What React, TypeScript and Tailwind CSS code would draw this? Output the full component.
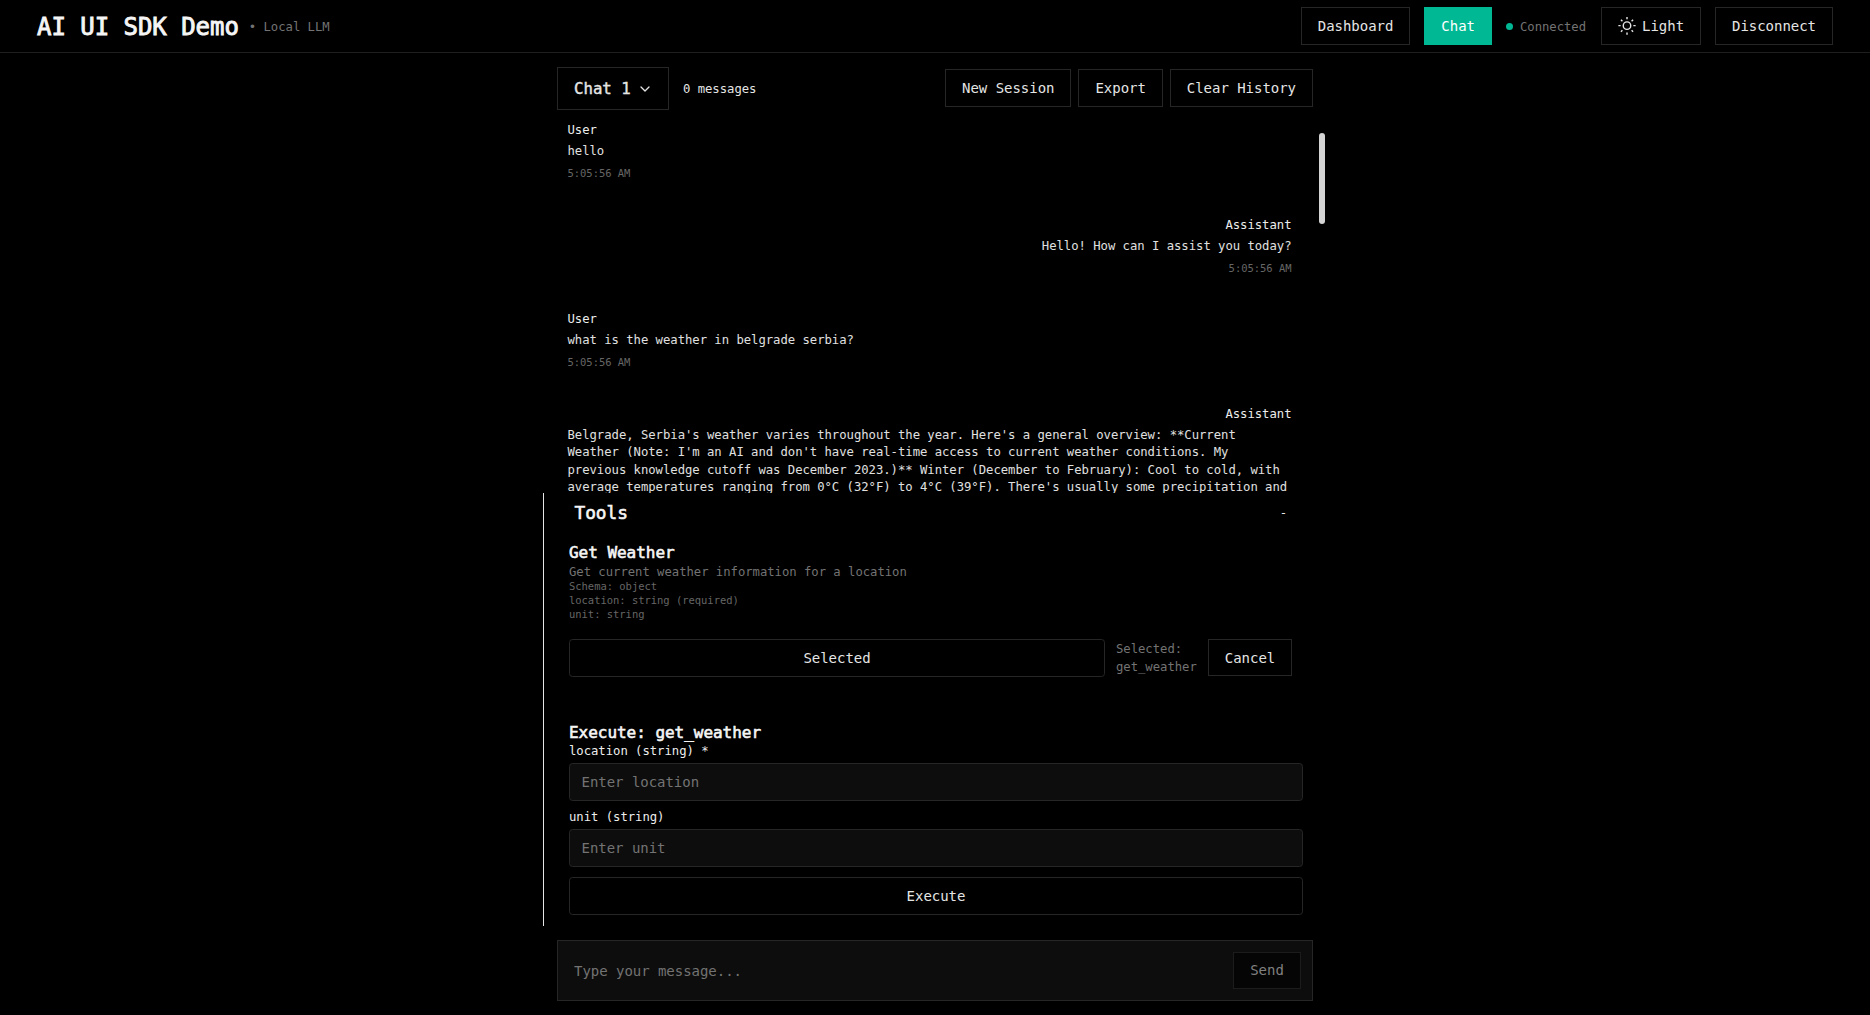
import type { ReactNode } from "react";

const HEAVY = "[-webkit-text-stroke:0.6px_currentColor]";

function Button({ children, className = "" }: { children: ReactNode; className?: string }) {
  return (
    <button
      className={`flex items-center justify-center border px-[16px] text-[14px] leading-[21px] whitespace-nowrap ${className}`}
    >
      {children}
    </button>
  );
}

function SunIcon() {
  return (
    <svg className="mr-[6px] size-[18px]" viewBox="0 0 24 24" fill="none" stroke="currentColor" strokeWidth="1.9">
      <circle cx="12" cy="11.5" r="5" />
      <path d="M12 0v3M12 20.5v3M3.9 3.6l2 2M18.1 17.6l2 2M.5 11.5h3M20.5 11.5h3M3.9 19.6l2-2M18.1 5.6l2-2" />
    </svg>
  );
}

function Message({ author, time, right = false, children }: { author: string; time?: string; right?: boolean; children: ReactNode }) {
  return (
    <article className={`h-[94.5px] shrink-0 text-[12.25px] ${right ? "text-right" : ""}`}>
      <div className="h-[22px] leading-[18px] text-[#ededed]">{author}</div>
      <div className="text-left leading-[17.5px] text-[#e0e0e0]">
        <div className={right && time ? "text-right" : ""}>{children}</div>
      </div>
      {time && <div className="mt-[5.5px] text-[10.5px] leading-[14px] text-[#666]">{time}</div>}
    </article>
  );
}

function Field({ label, placeholder }: { label: string; placeholder: string }) {
  return (
    <label className="mb-[9px] block text-[#ededed]">
      <span className="block h-[19px] text-[12.25px] leading-[14px]">{label}</span>
      <input
        className="block h-[38px] w-full rounded-[3.5px] border border-[#262626] bg-[#0d0d0d] px-[11.5px] text-[14px] outline-none placeholder:text-[#737373]"
        placeholder={placeholder}
      />
    </label>
  );
}

export default function App() {
  return (
    <div className="flex h-[1015px] flex-col overflow-hidden bg-black font-['DejaVu_Sans_Mono',monospace] text-[#e5e5e5] tracking-[-0.002em]">
      <header className="flex h-[53px] shrink-0 items-center justify-between border-b border-[#1f1f1f] px-[37px]">
        <div className="flex items-center pt-[2px]">
          <h1 className="text-[24px] leading-[28px] text-[#f5f5f5] [-webkit-text-stroke:0.9px_currentColor]">AI UI SDK Demo</h1>
          <span className="ml-[10px] text-[12.25px] text-[#737373]">• Local LLM</span>
        </div>
        <nav className="flex items-center gap-[14px]">
          <Button className="h-[38px] border-[#262626]">Dashboard</Button>
          <Button className="h-[38px] border-[#00b894] bg-[#00b894] text-white">Chat</Button>
          <div className="flex items-center gap-[7px] pr-px text-[12.25px] text-[#737373]">
            <span className="size-[7px] rounded-full bg-[#00b894]" />
            <span className="pt-[2px]">Connected</span>
          </div>
          <Button className="h-[38px] border-[#262626]"><SunIcon />Light</Button>
          <Button className="h-[38px] border-[#262626]">Disconnect</Button>
        </nav>
      </header>

      <main className="mx-auto flex w-[756px] grow flex-col">
        <div className="mt-[14px] flex h-[43px] shrink-0 items-center justify-between">
          <div className="flex items-center gap-[14px]">
            <button className="flex h-[43px] w-[112px] items-center gap-[7px] border border-[#262626] pl-[16px] text-[15.75px] whitespace-nowrap [-webkit-text-stroke:0.4px_currentColor]">
              Chat 1
              <svg className="size-[14px] shrink-0" viewBox="0 0 14 14" fill="none" stroke="currentColor" strokeWidth="1.3" strokeLinecap="round" strokeLinejoin="round">
                <path d="M3 5l4 4 4-4" />
              </svg>
            </button>
            <span className="pt-[2px] text-[12.25px]">0 messages</span>
          </div>
          <div className="flex gap-[7px] pb-px">
            <Button className="h-[38px] border-[#262626]">New Session</Button>
            <Button className="h-[38px] border-[#262626]">Export</Button>
            <Button className="h-[38px] border-[#262626]">Clear History</Button>
          </div>
        </div>

        <section className="relative h-[383px] shrink-0">
          <div className="h-full overflow-hidden pt-[11px] pr-[21.5px] pl-[10.5px]">
            <Message author="User" time="5:05:56 AM">hello</Message>
            <Message author="Assistant" time="5:05:56 AM" right>Hello! How can I assist you today?</Message>
            <Message author="User" time="5:05:56 AM">what is the weather in belgrade serbia?</Message>
            <Message author="Assistant" right>
              <p className="whitespace-pre">{`Belgrade, Serbia's weather varies throughout the year. Here's a general overview: **Current
Weather (Note: I'm an AI and don't have real-time access to current weather conditions. My
previous knowledge cutoff was December 2023.)** Winter (December to February): Cool to cold, with
average temperatures ranging from 0°C (32°F) to 4°C (39°F). There's usually some precipitation and`}</p>
            </Message>
          </div>
          <div className="absolute top-[23px] -right-[12px] h-[91px] w-[6px] rounded-full bg-[#d4d4d4]" />
        </section>

        <section className="-ml-[14px] h-[433px] shrink-0 border-l border-[#e5e5e5] pl-[25px]">
          <div className="flex h-[39px] items-center justify-between pt-px pr-[26px] pl-[5.5px]">
            <h2 className={`text-[17.8px] text-[#f5f5f5] ${HEAVY}`}>Tools</h2>
            <span className="text-[12.25px]">-</span>
          </div>
          <div className="pt-[10px]">
            <h3 className={`text-[16px] leading-[21px] text-[#f5f5f5] ${HEAVY}`}>Get Weather</h3>
            <p className="h-[16px] pt-px text-[12.25px] leading-[17.5px] text-[#737373]">Get current weather information for a location</p>
            <div className="text-[10.5px] leading-[14px] text-[#666]">
              <p>Schema: object</p>
              <p>location: string (required)</p>
              <p>unit: string</p>
            </div>
          </div>
          <div className="mt-[17.5px] flex pr-[21px]">
            <Button className="h-[38px] w-[536px] shrink-0 rounded-[3.5px] border-[#262626] pt-[2px]">Selected</Button>
            <div className="ml-[11px] w-[92px] pt-px text-[12.25px] leading-[18px] text-[#737373]">
              Selected:
              <br />
              get_weather
            </div>
            <Button className="h-[37px] w-[84px] border-[#262626] pt-[2px]">Cancel</Button>
          </div>
          <form className="mt-[47px] w-[734px]" onSubmit={(e) => e.preventDefault()}>
            <h3 className={`h-[20px] text-[16px] leading-[18px] text-[#f5f5f5] ${HEAVY}`}>Execute: get_weather</h3>
            <Field label="location (string) *" placeholder="Enter location" />
            <Field label="unit (string)" placeholder="Enter unit" />
            <Button className="mt-[10px] h-[38px] w-full rounded-[3.5px] border-[#262626] pt-px">Execute</Button>
          </form>
        </section>

        <div className="mt-[14px] flex h-[61px] shrink-0 items-start border border-[#262626] bg-[#0d0d0d] pr-[11px] pl-[16px]">
          <input className="h-[60px] grow bg-transparent text-[14px] outline-none placeholder:text-[#737373]" placeholder="Type your message..." />
          <Button className="mt-[11px] h-[37px] w-[68px] border-[#1c1c1c] bg-[#050505] text-[#808080]">Send</Button>
        </div>
      </main>
    </div>
  );
}
